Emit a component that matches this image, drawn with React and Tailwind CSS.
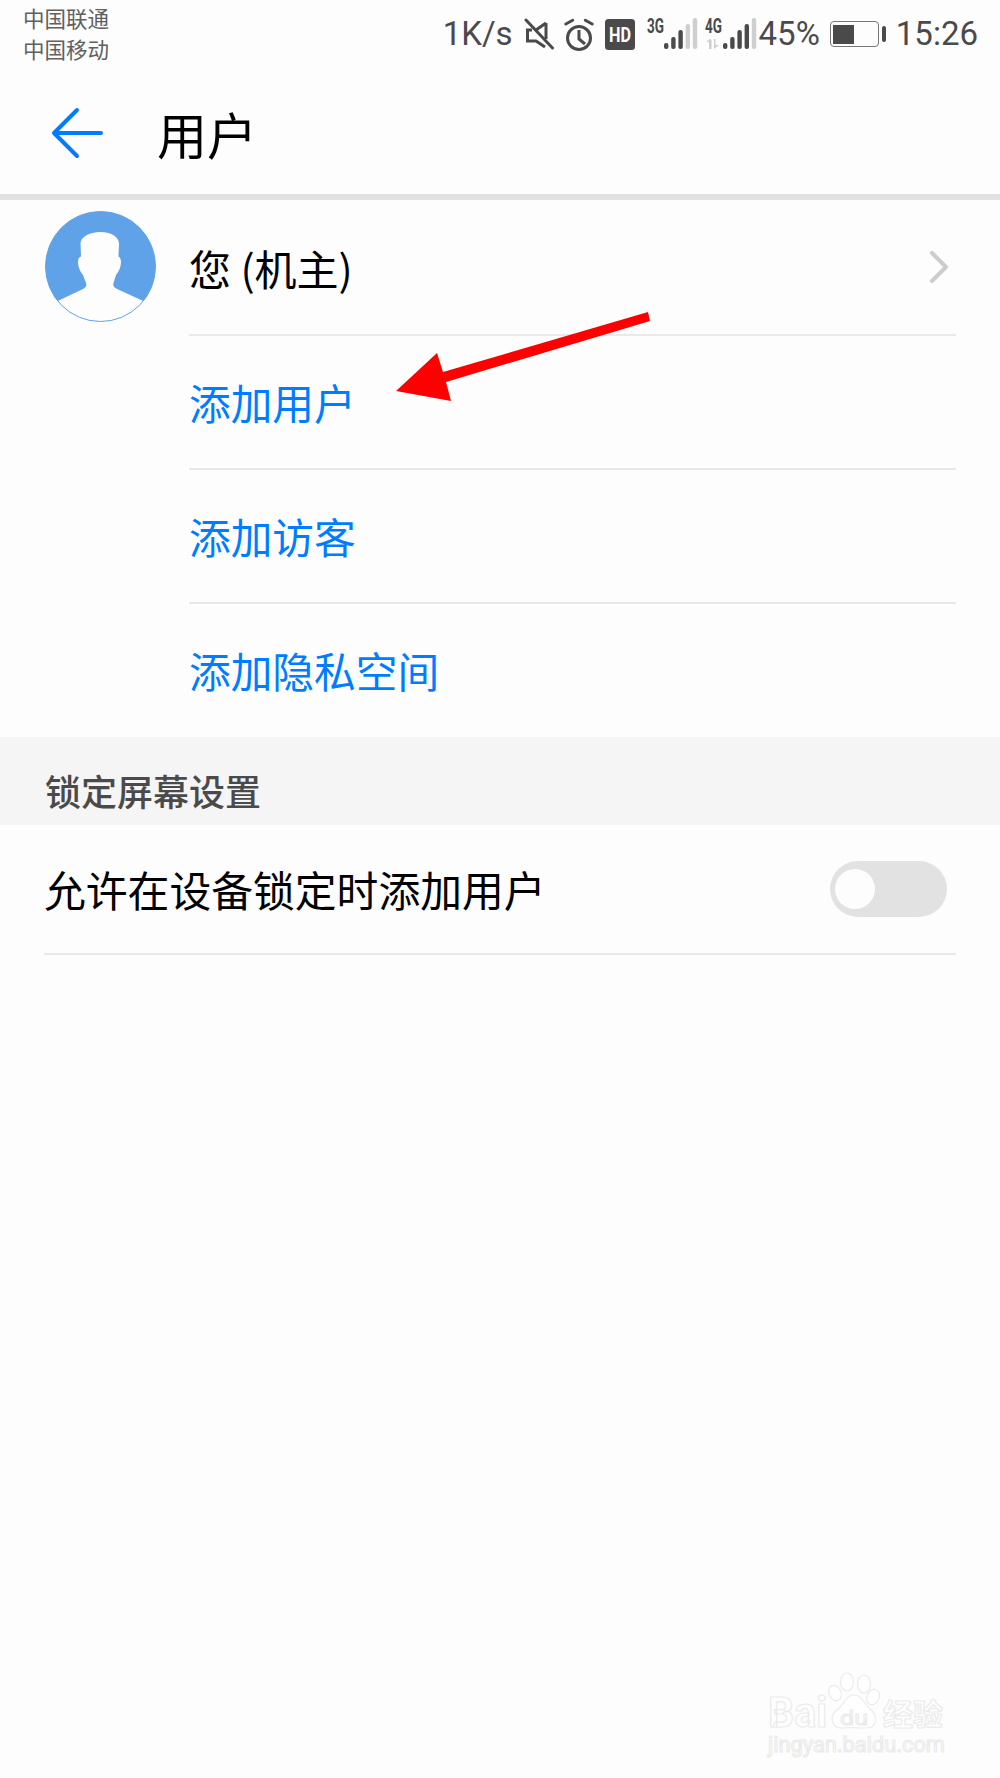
const cjk = '"Noto Sans CJK SC", "Noto Sans", sans-serif'
const roboto = 'Roboto, "Liberation Sans", sans-serif'

function MuteIcon() {
  return (
    <svg width="30" height="32" viewBox="0 0 30 32" fill="none" stroke="#4a4a4a" strokeWidth="3">
      <path d="M22 5 L12 12 M8 12 H3.5 V23 H12 L21 29 M22 5 V21" />
      <path d="M2 2 L28.5 30" strokeLinecap="round" />
    </svg>
  )
}

function AlarmIcon() {
  return (
    <svg width="32" height="33" viewBox="0 0 32 33" fill="none" stroke="#4a4a4a" strokeWidth="3">
      <circle cx="16" cy="20" r="11.5" />
      <path d="M16 12 V21 L22 26" />
      <path d="M2.8 6 L9.7 2.3 M22.3 2.3 L29.2 6" strokeLinecap="round" />
    </svg>
  )
}

function HdIcon() {
  return (
    <svg width="30" height="31" viewBox="0 0 30 31">
      <rect width="30" height="31" rx="3.5" fill="#4a4a4a" />
      <text x="4" y="22.5" fontSize="20" fontWeight="700" fill="#fdfdfd" fontFamily={roboto} textLength="22" lengthAdjust="spacingAndGlyphs">HD</text>
    </svg>
  )
}

function Signal({ label, tops, withArrows }) {
  const dark = '#4a4a4a'
  const light = '#cfcfcf'
  const shift = withArrows ? 18 : 17
  return (
    <svg width={withArrows ? 52 : 50} height="33" viewBox={`0 0 ${withArrows ? 52 : 50} 33`} className="overflow-visible">
      <text x="0" y="15" fontSize="20" fontWeight="700" fill={dark} fontFamily={roboto} textLength="17" lengthAdjust="spacingAndGlyphs">{label}</text>
      {withArrows && <path d="M4 31 V24 H1.5 L5 20.5 L6.5 22 V31 Z M9 21 V31 L14 27 H10.5 V21 Z" fill={light} />}
      {tops.map((bar, i) => (
        <rect key={i} x={shift + i * 7.2} y={bar.top} width="4.4" height={31 - bar.top} rx="2" fill={bar.on ? dark : light} />
      ))}
    </svg>
  )
}

function Battery() {
  return (
    <div className="flex items-center gap-[3px]">
      <div className="w-[49px] h-[26px] rounded-[4px] border-[1.5px] border-[#777777] p-[2.5px]">
        <div className="w-[21px] h-full bg-[#4a4a4a]" />
      </div>
      <div className="w-[4px] h-[16px] rounded-[2px] bg-[#4a4a4a]" />
    </div>
  )
}

function StatusBar() {
  return (
    <div className="h-[70px] flex justify-between pl-[23px] pr-[22px]">
      <div className="pt-[3px] text-[21.5px] leading-[30.5px] text-[#606060]" style={{ fontFamily: cjk }}>
        <div>中国联通</div>
        <div>中国移动</div>
      </div>
      <div className="flex items-center h-[68px] text-[33px] text-[#4a4a4a]" style={{ fontFamily: roboto }}>
        <span>1K/s</span>
        <div className="ml-[11px]"><MuteIcon /></div>
        <div className="ml-[9px]"><AlarmIcon /></div>
        <div className="ml-[10px]"><HdIcon /></div>
        <div className="ml-[12px]">
          <Signal label="3G" tops={[{ top: 25, on: true }, { top: 19, on: true }, { top: 12, on: true }, { top: 6, on: false }, { top: 0, on: false }]} />
        </div>
        <div className="ml-[8px]">
          <Signal label="4G" withArrows tops={[{ top: 25, on: true }, { top: 19, on: true }, { top: 12, on: true }, { top: 6, on: true }, { top: 0, on: false }]} />
        </div>
        <span className="ml-[2px]">45%</span>
        <div className="ml-[10px]"><Battery /></div>
        <span className="ml-[10px]">15:26</span>
      </div>
    </div>
  )
}

function Avatar() {
  return (
    <svg width="111" height="111" viewBox="0 0 111 111" className="shrink-0">
      <circle cx="55.5" cy="55.5" r="55" fill="#fdfdfd" stroke="#60a2e8" strokeWidth="1" />
      <path
        d="M12.7 90 A55 55 0 1 1 98.3 90 L72 78 C69 76.5 67.5 74.5 68.5 72 L71 64 C74 60 76 56 76 51 C76 47.5 74.5 46 73.5 45.5 L74 33 C74 26 67 21 55.5 21 C44 21 36 26 35.5 32 L36 45.5 C34 46 33 48 33 51 C33 56 35.5 61 38 64 L41 72 C42 75 41 76 38 78 Z"
        fill="#60a2e8"
      />
    </svg>
  )
}

function BlueRow({ children }) {
  return (
    <div className="ml-[189px] mr-[44px] h-[134px] flex items-center border-b-[2px] border-[#e9e9e9] text-[41.7px] text-[#007dff]">
      {children}
    </div>
  )
}

function RedArrow() {
  return (
    <svg width="265" height="100" viewBox="390 305 265 100" className="absolute left-[390px] top-[305px]">
      <polygon points="648,312 650,321 446,382 451,401 396,391 437,353 443,372" fill="#ff0000" />
    </svg>
  )
}

function Watermark() {
  const common = { fill: '#ffffff', stroke: '#ebebeb', strokeWidth: 1.2 }
  return (
    <svg width="200" height="105" viewBox="0 0 200 105" className="absolute left-[760px] top-[1660px] overflow-visible">
      <ellipse cx="75" cy="33" rx="6" ry="8" transform="rotate(-25 75 33)" {...common} />
      <ellipse cx="87" cy="22" rx="6.5" ry="9" {...common} />
      <ellipse cx="104" cy="24" rx="6.5" ry="9" {...common} />
      <ellipse cx="113" cy="37" rx="6" ry="8" transform="rotate(25 113 37)" {...common} />
      <path d="M94 35 C102 35 104 44 110 49 C118 55 118 68 106 68 C100 68 90 67 82 68 C71 68 69 56 77 50 C84 45 86 35 94 35 Z" {...common} />
      <text x="8" y="67" fontSize="42" fontWeight="700" fontFamily={roboto} textLength="59" lengthAdjust="spacingAndGlyphs" {...common}>Bai</text>
      <text x="80" y="65" fontSize="21" fontFamily={roboto} textLength="28" lengthAdjust="spacingAndGlyphs" {...common}>du</text>
      <text x="123" y="65" fontSize="30" fontWeight="700" fontFamily={cjk} {...common}>经验</text>
      <text x="8" y="92" fontSize="22" fontFamily={roboto} textLength="177" lengthAdjust="spacingAndGlyphs" {...common}>jingyan.baidu.com</text>
    </svg>
  )
}

export default function App() {
  return (
    <div className="relative w-[1000px] min-h-[1778px] bg-[#fdfdfd] overflow-hidden" style={{ fontFamily: cjk }}>
      <StatusBar />

      <div className="h-[130px] flex items-center pt-[1px] border-b-[6px] border-[#e1e1e1]">
        <svg width="54" height="54" viewBox="0 0 54 54" fill="none" stroke="#007dff" strokeWidth="4" strokeLinecap="round" strokeLinejoin="round" className="ml-[51px]">
          <path d="M50 27 H4 M26 4 L3 27 L26 50" />
        </svg>
        <span className="ml-[52px] text-[50px] leading-none text-black">用户</span>
      </div>

      <div className="flex pl-[44.5px] pr-[44px] h-[136px]">
        <div className="pt-[11px] w-[144.5px] shrink-0">
          <Avatar />
        </div>
        <div className="flex-1 flex items-center justify-between border-b-[2px] border-[#e9e9e9]">
          <span className="text-[42px] text-black">您 (机主)</span>
          <svg width="20" height="32" viewBox="0 0 20 32" fill="none" stroke="#cccccc" strokeWidth="4" strokeLinecap="round" strokeLinejoin="round" className="mr-[7px]">
            <path d="M3 2 L17 16 L3 30" />
          </svg>
        </div>
      </div>

      <BlueRow>添加用户</BlueRow>
      <BlueRow>添加访客</BlueRow>
      <div className="ml-[189px] mr-[44px] h-[133px] flex items-center text-[41.7px] text-[#007dff]">添加隐私空间</div>

      <div className="h-[88px] bg-[#f5f5f5] pl-[45px] pt-[25px] text-[36px] leading-[56px] font-medium text-[#4a4a4a]">锁定屏幕设置</div>

      <div className="mx-[44px] h-[130px] flex items-center justify-between border-b-[2px] border-[#e9e9e9]">
        <span className="text-[41.8px] text-black">允许在设备锁定时添加用户</span>
        <div className="mr-[9px] w-[117px] h-[56px] rounded-full bg-[#e2e2e2] flex items-center pl-[5px]">
          <div className="w-[40px] h-[40px] rounded-full bg-[#fdfdfd]" />
        </div>
      </div>

      <RedArrow />
      <Watermark />
    </div>
  )
}
